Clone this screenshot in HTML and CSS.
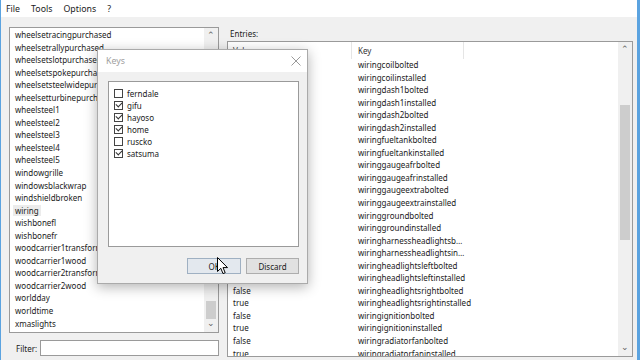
FILE: index.html
```html
<!DOCTYPE html>
<html lang="en">
  <head>
    <meta charset="UTF-8" />
    <title>Save Editor</title>
    <link rel="stylesheet" href="styles.css">
  </head>
  <body>
    <div class="window">
      <div class="menubar">
        <span>File</span>
        <span>Tools</span>
        <span>Options</span>
        <span>?</span>
      </div>

      <div class="main">
        <div class="left">
          <div class="listbox">
            <ul class="items">
              <li>wheelsetracingpurchased</li>
              <li>wheelsetrallypurchased</li>
              <li>wheelsetslotpurchased</li>
              <li>wheelsetspokepurchased</li>
              <li>wheelsetsteelwidepurchased</li>
              <li>wheelsetturbinepurchased</li>
              <li>wheelsteel1</li>
              <li>wheelsteel2</li>
              <li>wheelsteel3</li>
              <li>wheelsteel4</li>
              <li>wheelsteel5</li>
              <li>windowgrille</li>
              <li>windowsblackwrap</li>
              <li>windshieldbroken</li>
              <li><span class="hover">wiring</span></li>
              <li>wishbonefl</li>
              <li>wishbonefr</li>
              <li>woodcarrier1transform</li>
              <li>woodcarrier1wood</li>
              <li>woodcarrier2transform</li>
              <li>woodcarrier2wood</li>
              <li>worldday</li>
              <li>worldtime</li>
              <li>xmaslights</li>
            </ul>
            <div class="vscroll">
              <div class="arrow">&#8963;</div>
              <div class="track"><div class="thumb thumb-left"></div></div>
              <div class="arrow down">&#8964;</div>
            </div>
          </div>
          <div class="filter">
            <label for="filter">Filter:</label>
            <input type="text" id="filter" />
          </div>
        </div>

        <div class="right">
          <div class="caption">Entries:</div>
          <div class="listbox">
            <div class="table">
              <div class="thead">
                <span class="c-val">Value</span>
                <span class="c-key">Key</span>
                <span class="c-rest"></span>
              </div>
              <div class="row"><span class="c-val">false</span><span class="c-key">wiringcoilbolted</span></div>
              <div class="row"><span class="c-val">true</span><span class="c-key">wiringcoilinstalled</span></div>
              <div class="row"><span class="c-val">false</span><span class="c-key">wiringdash1bolted</span></div>
              <div class="row"><span class="c-val">true</span><span class="c-key">wiringdash1installed</span></div>
              <div class="row"><span class="c-val">false</span><span class="c-key">wiringdash2bolted</span></div>
              <div class="row"><span class="c-val">true</span><span class="c-key">wiringdash2installed</span></div>
              <div class="row"><span class="c-val">false</span><span class="c-key">wiringfueltankbolted</span></div>
              <div class="row"><span class="c-val">true</span><span class="c-key">wiringfueltankinstalled</span></div>
              <div class="row"><span class="c-val">false</span><span class="c-key">wiringgaugeafrbolted</span></div>
              <div class="row"><span class="c-val">true</span><span class="c-key">wiringgaugeafrinstalled</span></div>
              <div class="row"><span class="c-val">false</span><span class="c-key">wiringgaugeextrabolted</span></div>
              <div class="row"><span class="c-val">true</span><span class="c-key">wiringgaugeextrainstalled</span></div>
              <div class="row"><span class="c-val">false</span><span class="c-key">wiringgroundbolted</span></div>
              <div class="row"><span class="c-val">true</span><span class="c-key">wiringgroundinstalled</span></div>
              <div class="row"><span class="c-val">false</span><span class="c-key">wiringharnessheadlightsb&hellip;</span></div>
              <div class="row"><span class="c-val">true</span><span class="c-key">wiringharnessheadlightsin&hellip;</span></div>
              <div class="row"><span class="c-val">false</span><span class="c-key">wiringheadlightsleftbolted</span></div>
              <div class="row"><span class="c-val">true</span><span class="c-key">wiringheadlightsleftinstalled</span></div>
              <div class="row"><span class="c-val">false</span><span class="c-key">wiringheadlightsrightbolted</span></div>
              <div class="row"><span class="c-val">true</span><span class="c-key">wiringheadlightsrightinstalled</span></div>
              <div class="row"><span class="c-val">false</span><span class="c-key">wiringignitionbolted</span></div>
              <div class="row"><span class="c-val">true</span><span class="c-key">wiringignitioninstalled</span></div>
              <div class="row"><span class="c-val">false</span><span class="c-key">wiringradiatorfanbolted</span></div>
              <div class="row"><span class="c-val">true</span><span class="c-key">wiringradiatorfaninstalled</span></div>
            </div>
            <div class="vscroll">
              <div class="arrow">&#8963;</div>
              <div class="track"><div class="thumb thumb-right"></div></div>
              <div class="arrow down">&#8964;</div>
            </div>
          </div>
        </div>
      </div>

      <!-- modal key picker -->
      <div class="dialog">
        <div class="titlebar">
          <span class="title">Keys</span>
          <svg class="close" width="10" height="10" viewBox="0 0 10 10">
            <path d="M0.5 0.5 L9.5 9.5 M9.5 0.5 L0.5 9.5" stroke="#9a9a9a" stroke-width="1" fill="none" />
          </svg>
        </div>
        <div class="dialog-body">
          <div class="checklist">
            <div class="check"><span class="box"></span>ferndale</div>
            <div class="check on"><span class="box"></span>gifu</div>
            <div class="check on"><span class="box"></span>hayoso</div>
            <div class="check on"><span class="box"></span>home</div>
            <div class="check"><span class="box"></span>ruscko</div>
            <div class="check on"><span class="box"></span>satsuma</div>
          </div>
          <div class="buttons">
            <button class="btn btn-ok">OK</button>
            <button class="btn">Discard</button>
          </div>
        </div>
      </div>

      <svg class="cursor" width="12" height="18" viewBox="0 0 12 18">
        <path d="M0.5 0.5 L0.5 14.5 L3.8 11.3 L6 16.6 L8.2 15.7 L6 10.6 L10.5 10.6 Z" fill="#fff" stroke="#000" stroke-width="1" />
      </svg>
    </div>
  </body>
</html>
```

FILE: styles.css
```css
body {
  margin: 0;
  font-family: "Noto Sans", "Open Sans", sans-serif;
  font-size: 8px;
  color: #1a1a1a;
}
.window {
  position: relative;
  width: 640px;
  height: 360px;
  box-sizing: border-box;
  border-left: 1px solid #5ba3e0;
  border-right: 3px solid #5ba3e0;
  background: #f0f0f0;
  overflow: hidden;
  display: flex;
  flex-direction: column;
}
.menubar {
  height: 17px;
  background: #fff;
  display: flex;
  align-items: center;
  padding-left: 5px;
  font-size: 8.8px;
}
.menubar span {
  margin-right: 11px;
}
.main {
  flex: 1;
  display: flex;
  gap: 8px;
  padding: 10px 4px 0 8px;
}
.left {
  width: 210px;
  display: flex;
  flex-direction: column;
}
.right {
  width: 406px;
  display: flex;
  flex-direction: column;
}
.listbox {
  border: 1px solid #9a9a9a;
  background: #fff;
  display: flex;
  overflow: hidden;
}
.left .listbox {
  height: 306px;
  box-sizing: border-box;
}
.right .listbox {
  height: 316px;
  box-sizing: border-box;
}
.items {
  list-style: none;
  margin: 0;
  padding: 1px 0 0 5px;
  flex: 1;
}
.items li {
  height: 12.55px;
  line-height: 12.55px;
  white-space: nowrap;
}
.hover {
  background: #ececec;
  padding: 0 2px;
  margin-left: -2px;
}
.vscroll {
  width: 14px;
  background: #f0f0f0;
  display: flex;
  flex-direction: column;
}
.arrow {
  height: 13px;
  line-height: 13px;
  text-align: center;
  font-size: 9px;
  color: #606060;
}
.arrow.down {
  line-height: 8px;
}
.track {
  flex: 1;
  display: flex;
  flex-direction: column;
}
.thumb {
  background: #cdcdcd;
  margin: 0 2px 0 2px;
}
.thumb-left {
  margin-top: auto;
  height: 18px;
}
.thumb-right {
  margin-top: 50px;
  height: 135px;
}
.filter {
  margin-top: 7px;
  height: 16px;
  display: flex;
  align-items: center;
}
.filter label {
  width: 33px;
  padding-left: 7px;
  box-sizing: border-box;
}
.filter input {
  flex: 1;
  height: 16px;
  box-sizing: border-box;
  border: 1px solid #9a9a9a;
  background: #fff;
  padding: 0;
}
.caption {
  height: 14px;
  line-height: 14px;
  padding-left: 3px;
}
.table {
  flex: 1;
  overflow: hidden;
}
.thead {
  height: 17px;
  display: flex;
  align-items: center;
  color: #333;
}
.thead span {
  height: 17px;
  line-height: 17px;
  box-sizing: border-box;
  border-right: 1px solid #e5e5e5;
}
.thead .c-rest {
  border-right: none;
}
.c-val {
  width: 124px;
  padding-left: 5px;
  box-sizing: border-box;
}
.c-key {
  width: 112px;
  padding-left: 6px;
  box-sizing: border-box;
  white-space: nowrap;
}
.row .c-key {
  width: 130px;
}
.row {
  height: 12.55px;
  line-height: 12.55px;
  display: flex;
}
.dialog {
  position: absolute;
  left: 96px;
  top: 49px;
  width: 211px;
  height: 235px;
  box-sizing: border-box;
  border: 1px solid #aaaaaa;
  background: #f0f0f0;
  box-shadow: 0 3px 12px rgba(0, 0, 0, 0.3);
  display: flex;
  flex-direction: column;
}
.titlebar {
  height: 22px;
  background: #fff;
  display: flex;
  align-items: center;
  justify-content: space-between;
  padding: 0 6px 0 8px;
}
.title {
  color: #a0a0a0;
  font-size: 8.8px;
}
.dialog-body {
  flex: 1;
  padding: 9px 8px 0 10px;
  display: flex;
  flex-direction: column;
}
.checklist {
  height: 166px;
  box-sizing: border-box;
  border: 1px solid #9a9a9a;
  background: #fff;
  padding: 5px 0 0 5px;
}
.check {
  height: 12px;
  display: flex;
  align-items: center;
}
.box {
  width: 9px;
  height: 9px;
  box-sizing: border-box;
  border: 1px solid #444;
  background: #fff;
  margin-right: 4px;
  position: relative;
}
.check.on .box::after {
  content: "";
  position: absolute;
  left: 1px;
  top: 0px;
  width: 5px;
  height: 3px;
  border-left: 1px solid #333;
  border-bottom: 1px solid #333;
  transform: rotate(-45deg);
}
.buttons {
  display: flex;
  justify-content: flex-end;
  gap: 5px;
  margin-top: 11px;
}
.btn {
  height: 16px;
  padding: 0;
  font-family: inherit;
  font-size: 8px;
  color: #1a1a1a;
  background: #e1e1e1;
  border: 1px solid #adadad;
  width: 53px;
}
.btn-ok {
  width: 54px;
  background: #e3e8ee;
  border-color: #9fb0c2;
}
.cursor {
  position: absolute;
  left: 216px;
  top: 257px;
}
```
